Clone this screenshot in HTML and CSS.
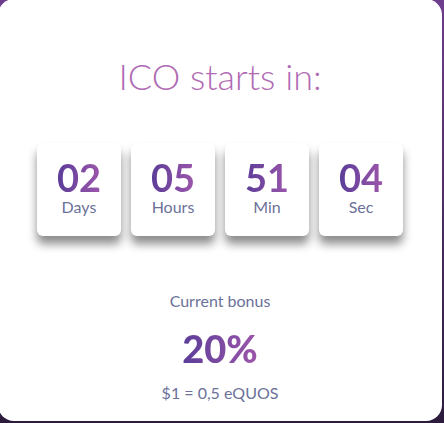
FILE: index.html
```html
<!DOCTYPE html>
<html lang="en">
<head>
  <meta charset="UTF-8">
  <meta name="viewport" content="width=device-width, initial-scale=1">
  <title>ICO countdown</title>
  <link rel="stylesheet" href="styles.css">
</head>
<body>
  <div class="card">
    <h2 class="title">ICO starts in:</h2>

    <div class="countdown">
      <div class="unit">
        <span class="num">02</span>
        <span class="label">Days</span>
      </div>
      <div class="unit">
        <span class="num">05</span>
        <span class="label">Hours</span>
      </div>
      <div class="unit">
        <span class="num">51</span>
        <span class="label">Min</span>
      </div>
      <div class="unit">
        <span class="num">04</span>
        <span class="label">Sec</span>
      </div>
    </div>

    <div class="bonus">
      <p class="bonus-label">Current bonus</p>
      <p class="bonus-value">20%</p>
      <p class="rate">$1 = 0,5 eQUOS</p>
    </div>
  </div>
</body>
</html>
```

FILE: styles.css
```css
body {
  margin: 0;
  padding: 0;
  height: 423px;
  overflow: hidden;
  background: linear-gradient(180deg, #6e3d8f, #2c1b3c); /* page behind the card */
  font-family: 'Lato', 'Open Sans', Arial, sans-serif;
}

.card {
  box-sizing: border-box;
  height: 422px;
  margin: -1px 2px 0 -2px;
  padding-top: 56px;
  background: #fff;
  border-radius: 16px;
  text-align: center;
}

.title {
  margin: 0;
  font-size: 36px;
  line-height: 43px;
  font-weight: 300;
  color: #b06bb4;
}

.countdown {
  display: flex;
  justify-content: center;
  gap: 10px;
  margin-top: 45px;
}

.unit {
  display: flex;
  flex-direction: column;
  align-items: center;
  width: 84px;
  height: 93px;
  box-sizing: border-box;
  padding-top: 16px;
  background: #fff;
  border-radius: 6px;
  box-shadow: 0 8px 10px rgba(0, 0, 0, 0.45);
}

/* gradient text for the numbers */
.num,
.bonus-value {
  background: linear-gradient(90deg, #5b3d98, #9c56ab);
  -webkit-background-clip: text;
  background-clip: text;
  color: transparent;
}

.num {
  font-size: 38px;
  line-height: 36px;
  font-weight: 700;
}

.label {
  margin-top: 2px;
  font-size: 16px;
  line-height: 20px;
  color: #6b7199;
}

.bonus {
  margin-top: 55px;
}

.bonus-label,
.bonus-value,
.rate {
  margin: 0;
}

.bonus-label {
  font-size: 16px;
  line-height: 20px;
  color: #6b7199;
}

.bonus .bonus-value {
  width: fit-content;
  margin: 17px auto 0;
  font-size: 38px;
  line-height: 40px;
  font-weight: 900;
}

.bonus .rate {
  margin-top: 15px;
  font-size: 16px;
  line-height: 20px;
  color: #6b7199;
}
```
